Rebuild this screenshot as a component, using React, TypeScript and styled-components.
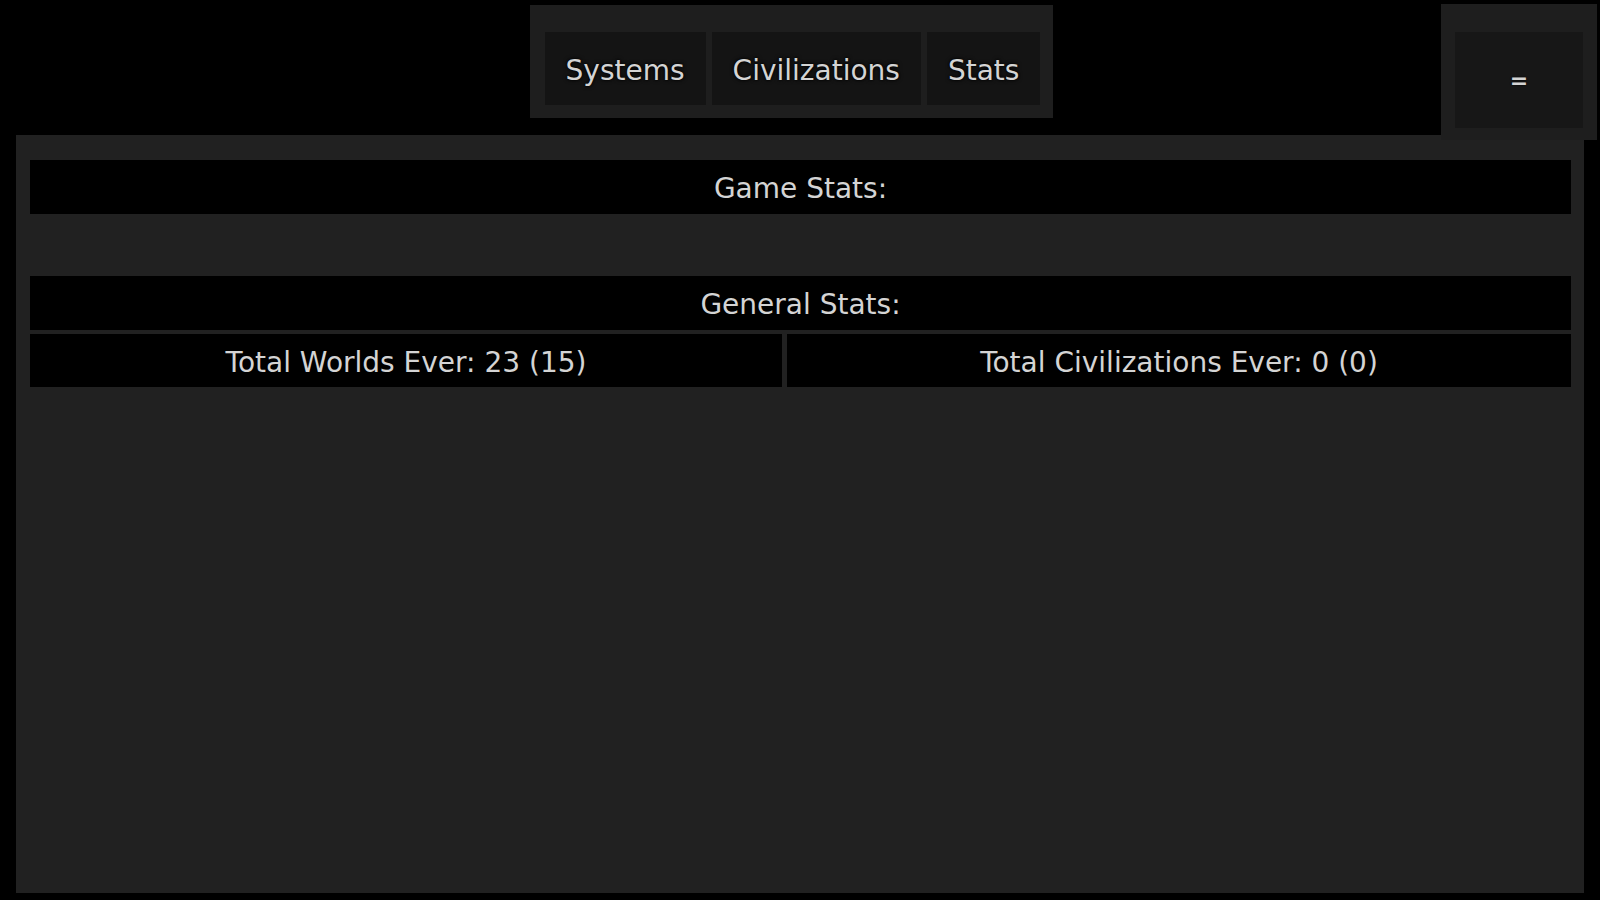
import styled, { createGlobalStyle } from "styled-components";

/* --------------------------
    TOKENS
--------------------------- */
const PAGE = "#000000";
const PANEL = "#212121";
const GROUP = "#1e1e1e";
const TAB = "#141414";
const BAR = "#000000";
const TEXT = "#d4d4d4";
const FONT = `"Century Gothic", "DejaVu Sans", "Lato", sans-serif`;

const GlobalStyle = createGlobalStyle`
  html, body {
    margin: 0;
    padding: 0;
    background: ${PAGE};
  }
  body {
    font-family: ${FONT};
    color: ${TEXT};
  }
`;

const Page = styled.div`
  position: relative;
  width: 1600px;
  height: 900px;
  overflow: hidden;
  background: ${PAGE};
  padding-top: 5px;
  box-sizing: border-box;
`;

const TopBar = styled.header`
  width: 1583px;
  height: 113px;
  display: flex;
  justify-content: center;
`;

const TabGroup = styled.nav`
  display: flex;
  gap: 6px;
  background: ${GROUP};
  padding: 27px 13px 13px 15px;
`;

const Tab = styled.button<{ $active?: boolean }>`
  height: 73px;
  padding: 4px 21px 0;
  border: none;
  background: ${TAB};
  color: ${TEXT};
  font-family: ${FONT};
  font-size: 28px;
  text-shadow: 0 0 2px #000, 0 0 4px #000;
  cursor: pointer;
`;

const MenuHolder = styled.div`
  position: absolute;
  top: 4px;
  left: 1441px;
  width: 156px;
  height: 136px;
  background: ${GROUP};
  padding: 28px 14px 0 14px;
  box-sizing: border-box;
`;

const MenuButton = styled.button`
  width: 128px;
  height: 96px;
  border: none;
  background: #171717;
  color: ${TEXT};
  font-family: ${FONT};
  font-size: 22px;
  font-weight: 700;
  text-shadow: 0 0 2px #000;
  cursor: pointer;
`;

const Panel = styled.main`
  margin: 17px 0 0 16px;
  width: 1568px;
  height: 758px;
  box-sizing: border-box;
  background: ${PANEL};
  padding: 25px 13px 0 14px;
  display: flex;
  flex-direction: column;
  gap: 62px;
`;

const Section = styled.section`
  display: flex;
  flex-direction: column;
  gap: 4px;
`;

const SectionTitle = styled.div`
  height: 54px;
  padding-top: 2px;
  box-sizing: border-box;
  background: ${BAR};
  display: flex;
  align-items: center;
  justify-content: center;
  font-size: 28px;
  text-shadow: 0 0 2px #000, 0 0 4px #000;
`;

const StatRow = styled.div`
  display: grid;
  grid-template-columns: 752fr 784fr;
  gap: 5px;
`;

const StatCell = styled.div`
  height: 53px;
  padding-top: 3px;
  box-sizing: border-box;
  background: ${BAR};
  display: flex;
  align-items: center;
  justify-content: center;
  font-size: 28px;
  text-shadow: 0 0 2px #000, 0 0 4px #000;
`;

const GENERAL = [
  "Total Worlds Ever: 23 (15)",
  "Total Civilizations Ever: 0 (0)",
];

export default function App() {
  return (
    <>
      <GlobalStyle />
      <Page>
        <TopBar>
          <TabGroup>
            <Tab>Systems</Tab>
            <Tab>Civilizations</Tab>
            <Tab $active>Stats</Tab>
          </TabGroup>
        </TopBar>
        <MenuHolder>
          <MenuButton>=</MenuButton>
        </MenuHolder>
        <Panel>
          <Section>
            <SectionTitle>Game Stats:</SectionTitle>
          </Section>
          <Section>
            <SectionTitle>General Stats:</SectionTitle>
            <StatRow>
              {GENERAL.map((s) => (
                <StatCell key={s}>{s}</StatCell>
              ))}
            </StatRow>
          </Section>
        </Panel>
      </Page>
    </>
  );
}
